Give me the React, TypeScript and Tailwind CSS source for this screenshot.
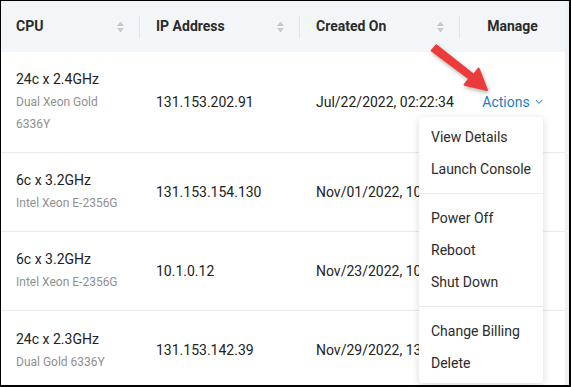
import React from 'react';

interface Server {
  cpu: string;
  model: string;
  ip: string;
  created: string;
  height: string;
}

const servers: Server[] = [
  { cpu: '24c x 2.4GHz', model: 'Dual Xeon Gold 6336Y', ip: '131.153.202.91', created: 'Jul/22/2022, 02:22:34', height: 'h-[101px]' },
  { cpu: '6c x 3.2GHz', model: 'Intel Xeon E-2356G', ip: '131.153.154.130', created: 'Nov/01/2022, 10:14:09', height: 'h-[79px]' },
  { cpu: '6c x 3.2GHz', model: 'Intel Xeon E-2356G', ip: '10.1.0.12', created: 'Nov/23/2022, 10:41:52', height: 'h-[79px]' },
  { cpu: '24c x 2.3GHz', model: 'Dual Gold 6336Y', ip: '131.153.142.39', created: 'Nov/29/2022, 13:05:17', height: 'h-[80px]' },
];

const menuGroups = [
  ['View Details', 'Launch Console'],
  ['Power Off', 'Reboot', 'Shut Down'],
  ['Change Billing', 'Delete'],
];

const SortIcon = () => (
  <svg width="9" height="14" viewBox="0 0 9 14" className="shrink-0">
    <path d="M4.5 1.5 L8 6 H1 Z" fill="#c6cacf" />
    <path d="M4.5 12.5 L8 8 H1 Z" fill="#c6cacf" />
  </svg>
);

const Divider = () => <span className="w-px h-[22px] bg-[#e3e6e9] shrink-0" />;

export default function App() {
  return (
    <div
      className="relative w-[571px] h-[387px] overflow-hidden bg-white border-t border-l border-r-2 border-b-2 border-black flex text-[#222]"
      style={{ fontFamily: 'Roboto, "Liberation Sans", sans-serif' }}
    >
      <div className="w-[564px] shrink-0 flex flex-col">
        {/* Header */}
        <div className="grid grid-cols-[139px_160px_160px_105px] h-[51px] bg-[#f3f6f8] text-[14px] font-bold text-[#2b2b2b] shrink-0">
          <div className="flex items-center pl-[15px]">
            <span className="flex-1">CPU</span>
            <SortIcon />
            <span className="w-[14px]" />
            <Divider />
          </div>
          <div className="flex items-center pl-[16px]">
            <span className="flex-1">IP Address</span>
            <SortIcon />
            <span className="w-[14px]" />
            <Divider />
          </div>
          <div className="flex items-center pl-[16px]">
            <span className="flex-1">Created On</span>
            <SortIcon />
            <span className="w-[14px]" />
            <Divider />
          </div>
          <div className="flex items-center justify-center">Manage</div>
        </div>

        {/* Rows */}
        {servers.map((s, i) => (
          <div
            key={i}
            className={`grid grid-cols-[139px_160px_160px_105px] ${s.height} shrink-0 border-b border-[#e8eaec] text-[14px]`}
          >
            <div className="flex flex-col justify-center pl-[15px] pr-[16px]">
              <div className="leading-[20px]">{s.cpu}</div>
              <div className="text-[12px] leading-[22px] text-[#909090] mt-[2px]">{s.model}</div>
            </div>
            <div className="flex items-center pl-[16px]">{s.ip}</div>
            <div className="flex items-center pl-[16px] whitespace-nowrap">{s.created}</div>
            <div className="flex items-center justify-center">
              {i === 0 && (
                <span className="flex items-center gap-[5px] text-[#1f7cc4]">
                  Actions
                  <svg width="8" height="6" viewBox="0 0 8 6">
                    <path d="M0.8 1 L4 4.4 L7.2 1" fill="none" stroke="#1f7cc4" strokeWidth="1" />
                  </svg>
                </span>
              )}
            </div>
          </div>
        ))}
      </div>
      <div className="w-[4px] shrink-0 bg-[#eef0f3]" />

      {/* Actions menu */}
      <div className="absolute left-[418px] top-[116px] w-[124px] bg-white rounded-[4px] shadow-[0_2px_8px_rgba(0,0,0,0.15)] py-[4px] text-[14px] text-[#2b2b2b]">
        {menuGroups.map((group, gi) => (
          <div key={gi}>
            {gi > 0 && <div className="h-px bg-[#e8eaec] my-[8px]" />}
            {group.map(item => (
              <div key={item} className="h-[32px] flex items-center pl-[12px] whitespace-nowrap">
                {item}
              </div>
            ))}
          </div>
        ))}
      </div>

      {/* Callout arrow */}
      <svg
        className="absolute left-[419px] top-[37px]"
        width="80"
        height="62"
        viewBox="420 38 80 62"
        style={{ filter: 'drop-shadow(1px 2px 2px rgba(0,0,0,0.3))' }}
      >
        <polygon
          points="436.2,45.3 473.6,74.8 478.6,68.5 487,90 464.6,84.7 469.4,78.6 431.8,50.7"
          fill="#ec3b3b"
          stroke="#ec3b3b"
          strokeWidth="2"
          strokeLinejoin="round"
        />
      </svg>
    </div>
  );
}
